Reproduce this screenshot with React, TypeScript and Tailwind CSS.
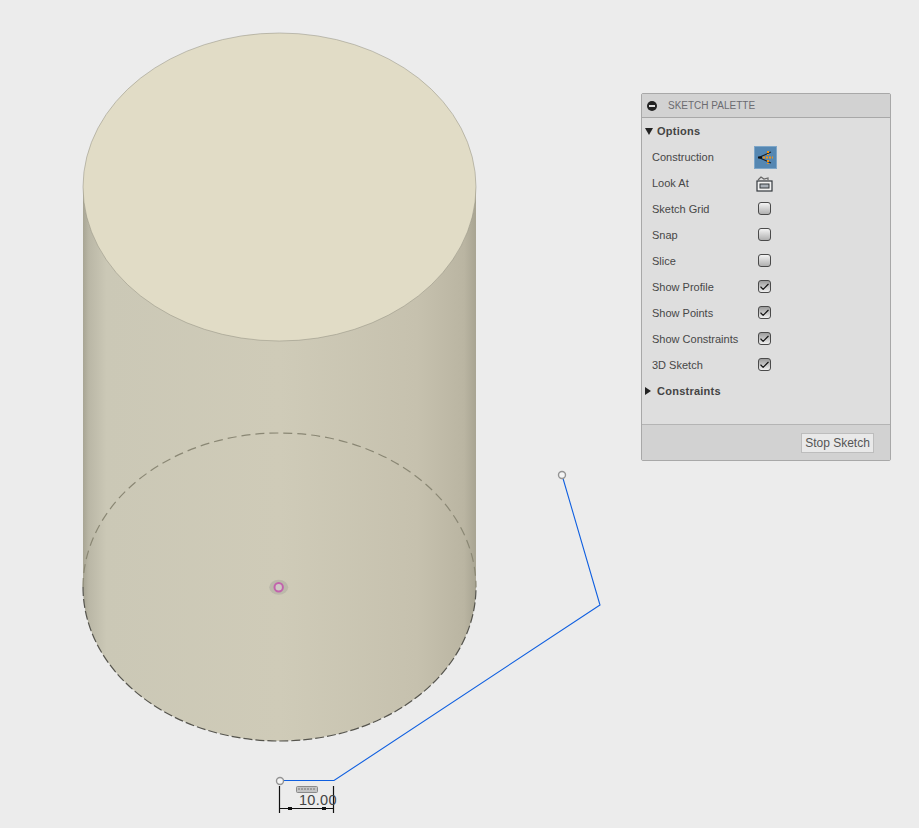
import { Check } from "lucide-react";

const rows = [
  { label: "Sketch Grid", checked: false },
  { label: "Snap", checked: false },
  { label: "Slice", checked: false },
  { label: "Show Profile", checked: true },
  { label: "Show Points", checked: true },
  { label: "Show Constraints", checked: true },
  { label: "3D Sketch", checked: true },
];

const Row = ({ label, children }: { label: string; children: React.ReactNode }) => (
  <div className="flex h-[26px] items-center pl-[10px]">
    <span className="w-[101px] text-[11px] text-[#474747]">{label}</span>
    <div className="flex w-[23px] justify-center">{children}</div>
  </div>
);

const CheckBox = ({ checked }: { checked: boolean }) => (
  <div
    className={`-mt-px flex h-[13px] w-[13px] items-center justify-center rounded-[3px] border border-[#4a4a4a] ${
      checked ? "bg-gradient-to-b from-[#9c9c9c] to-[#f0f0f0]" : "bg-gradient-to-b from-[#f4f4f4] to-[#b0b0b0]"
    }`}
  >
    {checked && <Check size={12} strokeWidth={2.5} color="#111" />}
  </div>
);

const Scene = () => (
  <svg className="absolute left-0 top-0" width="919" height="828" viewBox="0 0 919 828">
    <defs>
      <linearGradient id="side" x1="83" x2="476" y1="0" y2="0" gradientUnits="userSpaceOnUse">
        <stop offset="0" stopColor="#a8a594" />
        <stop offset="0.015" stopColor="#bab7a6" />
        <stop offset="0.06" stopColor="#cbc8b6" />
        <stop offset="0.5" stopColor="#cfcbb8" />
        <stop offset="0.85" stopColor="#c6c1ae" />
        <stop offset="0.97" stopColor="#bab5a2" />
        <stop offset="1" stopColor="#a8a492" />
      </linearGradient>
    </defs>
    <path d="M83 187 V587 A196.5 154 0 0 0 476 587 V187 Z" fill="url(#side)" />
    <ellipse cx="279.5" cy="187" rx="196.5" ry="154" fill="#e1dcc6" stroke="#8f8c7f" strokeWidth="0.5" />
    <path d="M83 587 A196.5 154 0 0 1 476 587" fill="none" stroke="#8a8774" strokeWidth="1.2" strokeDasharray="9 5" />
    <path d="M83 587 A196.5 154 0 0 0 476 587" fill="none" stroke="#55544d" strokeWidth="1.2" strokeDasharray="9 3" />
    <ellipse cx="278.7" cy="587.3" rx="9.5" ry="7.5" fill="#bcb9aa" />
    <circle cx="278.7" cy="587.3" r="4.2" fill="#cfc8c4" stroke="#c262ac" strokeWidth="2" />

    <path d="M280 780.5 H334 L600 605 L562 475" fill="none" stroke="#0f5fe0" strokeWidth="1.1" />
    <circle cx="562" cy="475" r="3.5" fill="#f4f4f4" stroke="#939393" strokeWidth="1.4" />
    <circle cx="280" cy="781" r="3.5" fill="#f4f4f4" stroke="#939393" strokeWidth="1.4" />

    <path d="M279.5 786 V813 M333.5 786 V813 M280 808.5 H333" stroke="#111" strokeWidth="1.2" fill="none" />
    <path d="M288 807 h4 v3 h-4 Z M322 807 h4 v3 h-4 Z" fill="#111" />
    <rect x="296.5" y="786.5" width="21" height="6" rx="1" fill="#c4c4c4" stroke="#8a8a8a" />
    <path d="M299 788 v2 M302 788 v2 M305 788 v2 M308 788 v2 M311 788 v2 M314 788 v2" stroke="#777" strokeWidth="1" />
  </svg>
);

const ConstructionIcon = () => (
  <div className="flex h-[23px] w-[23px] translate-x-px items-center justify-center border border-[#7ea6c8] bg-[#5587b2]">
    <svg width="17" height="15" viewBox="0 0 17 15">
      <path d="M14 2 L2 7.5 L14 13" fill="none" stroke="#1c2530" strokeWidth="1.1" />
      <path d="M1 7.5 H5" stroke="#111" strokeWidth="2" />
      <path d="M6 7.5 H16 M11 1 V5 M11 10 V14" fill="none" stroke="#f59210" strokeWidth="2" strokeDasharray="2 1" />
    </svg>
  </div>
);

const LookAtIcon = () => (
  <svg width="17" height="17" viewBox="0 0 17 17">
    <rect x="1" y="6" width="15" height="10" fill="#f1f1f1" stroke="#33383d" strokeWidth="1.2" />
    <rect x="4" y="9" width="9" height="4" fill="#a9b0b8" stroke="#33383d" strokeWidth="1" />
    <path d="M2 5 L5 2 L8 4 L12 3 V5" fill="none" stroke="#666" strokeWidth="1.2" />
  </svg>
);

const Palette = () => (
  <div className="absolute left-[641px] top-[93px] flex h-[368px] w-[250px] flex-col rounded-[2px] border border-[#a8a8a8] bg-[#dedede]">
    <div className="flex h-[24px] shrink-0 items-center border-b border-[#a8a8a8] bg-[#d2d2d2] pl-[5px]">
      <div className="flex h-[10px] w-[10px] items-center justify-center rounded-full bg-[#222]">
        <div className="h-[2px] w-[6px] bg-[#ddd]" />
      </div>
      <span className="ml-[11px] text-[10px] text-[#6b6b70]">SKETCH PALETTE</span>
    </div>
    <div className="flex-1">
      <div className="flex h-[26px] items-center pl-[3px]">
        <div className="h-0 w-0 border-x-[4px] border-t-[7px] border-x-transparent border-t-[#222]" />
        <span className="ml-[4px] text-[11px] font-bold tracking-[0.25px] text-[#444]">Options</span>
      </div>
      <Row label="Construction">
        <ConstructionIcon />
      </Row>
      <Row label="Look At">
        <LookAtIcon />
      </Row>
      {rows.map((r) => (
        <Row key={r.label} label={r.label}>
          <CheckBox checked={r.checked} />
        </Row>
      ))}
      <div className="flex h-[26px] items-center pl-[3px]">
        <div className="h-0 w-0 border-y-[4px] border-l-[6px] border-y-transparent border-l-[#222]" />
        <span className="ml-[6px] text-[11px] font-bold tracking-[0.25px] text-[#444]">Constraints</span>
      </div>
    </div>
    <div className="flex h-[36px] shrink-0 items-center justify-end border-t border-[#b4b4b4] bg-[#d2d2d2] pr-[16px]">
      <button className="h-[20px] w-[73px] border border-[#bdbdbd] bg-[#e9e9e9] text-[12px] text-[#555]">Stop Sketch</button>
    </div>
  </div>
);

export default function App() {
  return (
    <div className="relative h-[828px] w-[919px] overflow-hidden bg-[#ececec] font-['Liberation_Sans',sans-serif]">
      <Scene />
      <span className="absolute left-[299px] top-[791px] text-[14.5px] leading-[18px] tracking-[0.3px] text-[#444]">10.00</span>
      <Palette />
    </div>
  );
}
